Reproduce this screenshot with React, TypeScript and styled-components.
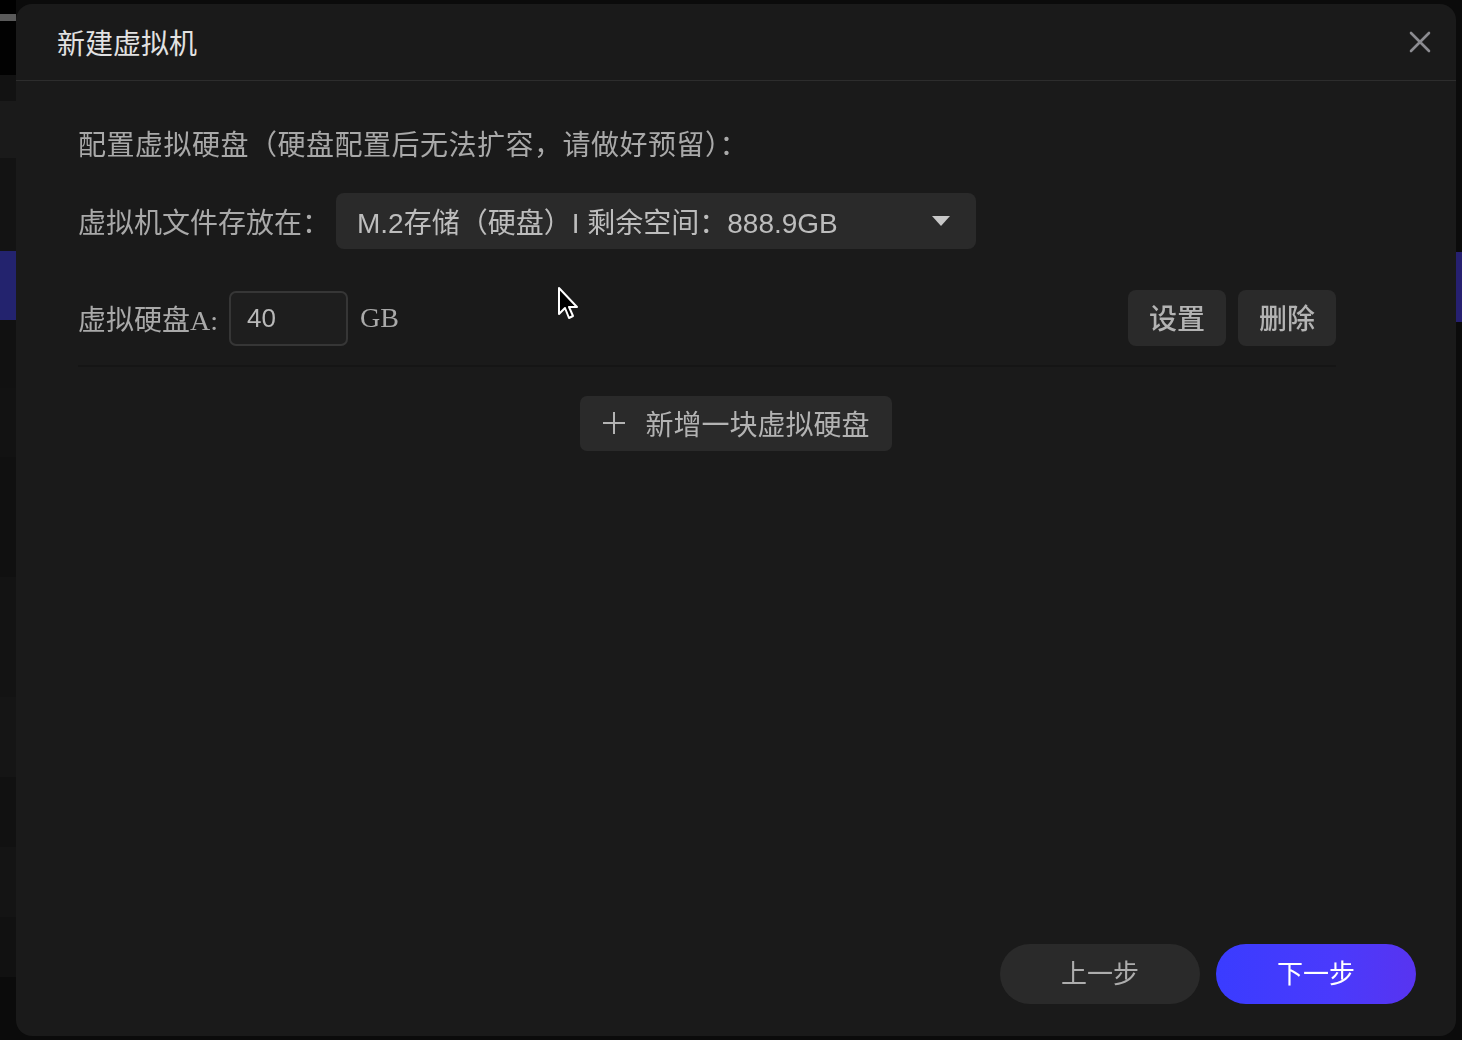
import styled, { createGlobalStyle } from "styled-components";

const GlobalStyle = createGlobalStyle`
  html, body {
    margin: 0;
    padding: 0;
    background: #0b0b0b;
    overflow: hidden;
  }
  * {
    box-sizing: border-box;
  }
`;

const SERIF = `"Liberation Serif", "Noto Sans CJK SC", serif`;
const SANS = `"Liberation Sans", "Noto Sans CJK SC", sans-serif`;

// the app that sits behind the dialog
const Backdrop = styled.div`
  width: 1462px;
  height: 1040px;
  display: flex;
  justify-content: space-between;
  background: #0b0b0b;
`;

const Sidebar = styled.div`
  width: 16px;
  display: flex;
  flex-direction: column;
`;

const SideItem = styled.div<{ $h: number; $bg: string }>`
  height: ${(p) => p.$h}px;
  background: ${(p) => p.$bg};
  flex-shrink: 0;
`;

const RightEdge = styled.div`
  width: 6px;
  display: flex;
  flex-direction: column;
  padding-top: 252px;
`;

const Overlay = styled.div`
  position: fixed;
  inset: 0;
  padding: 4px 6px 4px 16px;
`;

const Modal = styled.div`
  width: 1440px;
  height: 1032px;
  background: #1a1a1a;
  border-radius: 16px;
  display: flex;
  flex-direction: column;
  position: relative;
`;

const Header = styled.div`
  height: 77px;
  flex-shrink: 0;
  display: flex;
  align-items: center;
  justify-content: space-between;
  padding: 0 21px 0 41px;
  border-bottom: 1px solid #2d2d2d;
`;

const Title = styled.h1`
  margin: 0;
  font-family: ${SERIF};
  font-size: 28px;
  font-weight: 400;
  color: #e2e2e2;
`;

const CloseBtn = styled.button`
  width: 30px;
  height: 30px;
  padding: 0;
  border: none;
  background: none;
  display: flex;
  align-items: center;
  justify-content: center;
  cursor: pointer;
`;

const Body = styled.div`
  flex: 1;
  padding: 48px 120px 0 62px;
  display: flex;
  flex-direction: column;
`;

const Intro = styled.p`
  margin: 0;
  font-family: ${SERIF};
  font-size: 28px;
  letter-spacing: 0.5px;
  line-height: 34px;
  color: #a9a9a9;
`;

const Row = styled.div<{ $mt: number }>`
  display: flex;
  align-items: center;
  margin-top: ${(p) => p.$mt}px;
`;

const Label = styled.span`
  font-family: ${SERIF};
  font-size: 28px;
  color: #a9a9a9;
  white-space: nowrap;
`;

const Select = styled.div`
  width: 640px;
  height: 56px;
  margin-left: 6px;
  background: #2a2a2a;
  border-radius: 8px;
  display: flex;
  align-items: center;
  justify-content: space-between;
  padding: 0 26px 0 21px;
  font-family: ${SANS};
  font-size: 28px;
  color: #bdbdbd;
`;

const SizeInput = styled.div`
  width: 119px;
  height: 55px;
  margin-left: 11px;
  border: 2px solid #363636;
  border-radius: 7px;
  background: #1e1e1e;
  display: flex;
  align-items: center;
  padding-left: 16px;
  font-family: ${SANS};
  font-size: 26px;
  color: #b9b9b9;
`;

const Unit = styled.span`
  margin-left: 12px;
  font-family: ${SERIF};
  font-size: 28px;
  color: #a9a9a9;
`;

const Actions = styled.div`
  margin-left: auto;
  display: flex;
  gap: 12px;
`;

const SmallBtn = styled.button`
  width: 98px;
  height: 56px;
  border: none;
  border-radius: 8px;
  background: #2a2a2a;
  font-family: ${SANS};
  font-size: 28px;
  font-weight: 500;
  color: #b3b3b3;
  padding: 0 0 2px;
`;

const Divider = styled.div`
  height: 2px;
  background: #151515;
  margin-top: 19px;
`;

const AddBtn = styled.button`
  align-self: center;
  margin-top: 29px;
  margin-left: 58px;
  height: 55px;
  padding: 0 22px 2px 22px;
  border: none;
  border-radius: 7px;
  background: #2a2a2a;
  display: flex;
  align-items: center;
  gap: 19px;
  font-family: ${SANS};
  font-size: 28px;
  color: #b3b3b3;
`;

const Footer = styled.div`
  display: flex;
  justify-content: flex-end;
  gap: 16px;
  padding: 0 40px 32px;
`;

const PillBtn = styled.button<{ $primary?: boolean }>`
  width: 200px;
  height: 60px;
  border: none;
  border-radius: 30px;
  font-family: ${SANS};
  font-size: 26px;
  padding: 0 0 5px;
  color: ${(p) => (p.$primary ? "#ffffff" : "#adadad")};
  background: ${(p) =>
    p.$primary ? "linear-gradient(90deg, #3a3cff 0%, #4a3afc 60%, #5834f0 100%)" : "#2a2a2a"};
`;

const Cursor = styled.svg`
  position: absolute;
  left: 541px;
  top: 282px;
`;

const sideItems: [number, string][] = [
  [14, "#000"],
  [7, "#5a5a5a"],
  [54, "#020202"],
  [26, "#121212"],
  [57, "#1a1a1a"],
  [93, "#131313"],
  [69, "#23236e"],
  [68, "#111"],
  [69, "#121212"],
  [120, "#101010"],
  [120, "#131313"],
  [80, "#151515"],
  [70, "#111"],
  [70, "#141414"],
  [60, "#111"],
];

export default function App() {
  return (
    <>
      <GlobalStyle />
      <Backdrop>
        <Sidebar>
          {sideItems.map(([h, bg], i) => (
            <SideItem key={i} $h={h} $bg={bg} />
          ))}
        </Sidebar>
        <RightEdge>
          <SideItem $h={70} $bg="#262070" />
        </RightEdge>
      </Backdrop>
      <Overlay>
        <Modal>
          <Header>
            <Title>新建虚拟机</Title>
            <CloseBtn aria-label="close">
              <svg width="22" height="22" viewBox="0 0 22 22">
                <path d="M2 2 L20 20 M20 2 L2 20" stroke="#8b8b90" strokeWidth="2.6" strokeLinecap="round" />
              </svg>
            </CloseBtn>
          </Header>
          <Body>
            <Intro>配置虚拟硬盘（硬盘配置后无法扩容，请做好预留）：</Intro>
            <Row $mt={30}>
              <Label>虚拟机文件存放在：</Label>
              <Select>
                <span>M.2存储（硬盘）I 剩余空间：888.9GB</span>
                <svg width="18" height="10" viewBox="0 0 18 10">
                  <path d="M0 0 H18 L9 10 Z" fill="#c8c8c8" />
                </svg>
              </Select>
            </Row>
            <Row $mt={41}>
              <Label>虚拟硬盘A:</Label>
              <SizeInput>40</SizeInput>
              <Unit>GB</Unit>
              <Actions>
                <SmallBtn>设置</SmallBtn>
                <SmallBtn>删除</SmallBtn>
              </Actions>
            </Row>
            <Divider />
            <AddBtn>
              <svg width="24" height="24" viewBox="0 0 24 24">
                <path d="M12 1 V23 M1 12 H23" stroke="#b3b3b3" strokeWidth="2" />
              </svg>
              新增一块虚拟硬盘
            </AddBtn>
          </Body>
          <Footer>
            <PillBtn>上一步</PillBtn>
            <PillBtn $primary>下一步</PillBtn>
          </Footer>
          <Cursor width="24" height="38" viewBox="0 0 24 38">
            <path
              d="M2 2 L2 28 L8 22 L12 32 L16 30 L12 21 L20 21 Z"
              fill="#000"
              stroke="#fff"
              strokeWidth="2"
              strokeLinejoin="round"
            />
          </Cursor>
        </Modal>
      </Overlay>
    </>
  );
}
